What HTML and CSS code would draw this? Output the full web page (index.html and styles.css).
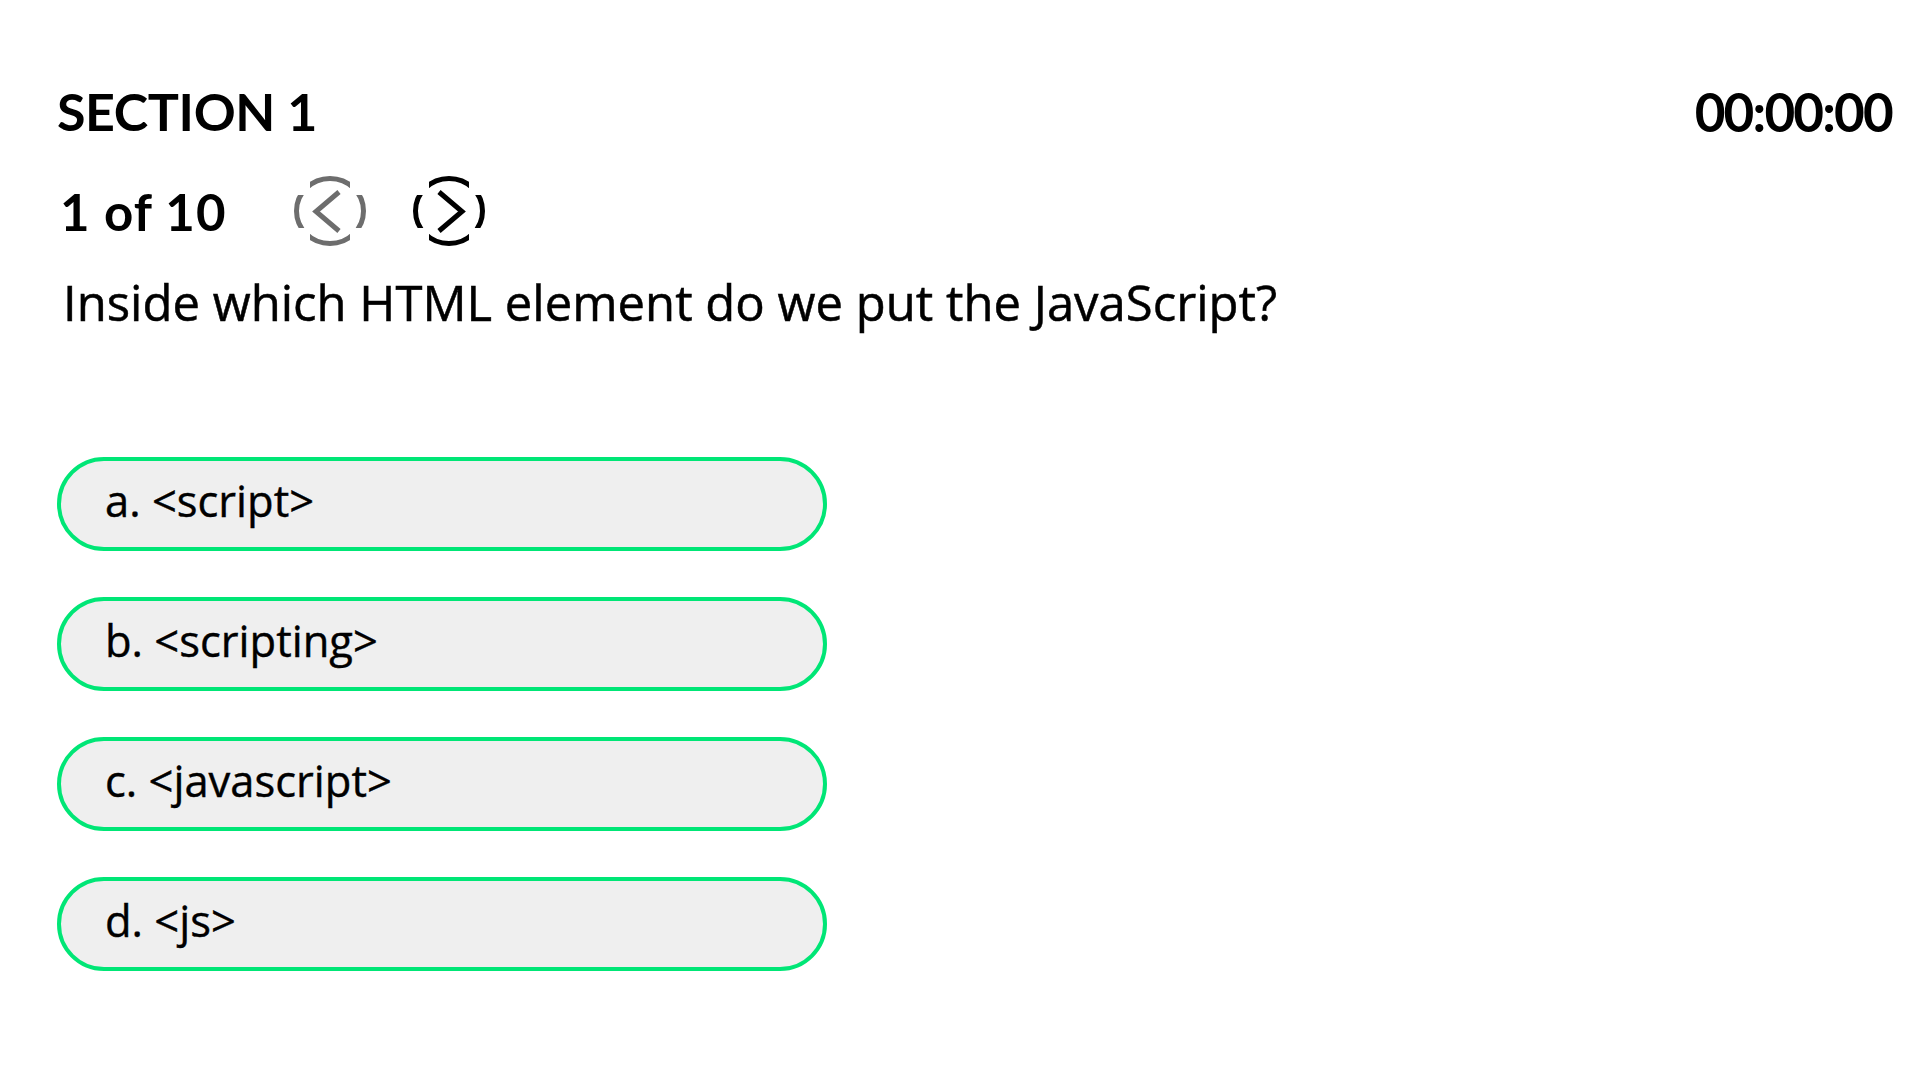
FILE: index.html
```html
<!DOCTYPE html>
<html lang="en">
<head>
<meta charset="utf-8">
<title>Quiz</title>
<link rel="stylesheet" href="styles.css">
</head>
<body>
<main class="page">
  <header class="top">
    <h1 class="section-title">SECTION 1</h1>
    <div class="timer">00:00:00</div>
  </header>
  <div class="nav-row">
    <span class="counter">1 of 10</span>
    <button class="nav-btn prev" aria-label="Previous">
      <svg viewBox="0 0 72 70" width="72" height="70">
        <defs>
          <clipPath id="cp1">
            <rect x="16" y="0" width="40" height="70"/>
            <rect x="0" y="19" width="72" height="33"/>
          </clipPath>
        </defs>
        <ellipse cx="36" cy="35" rx="33.5" ry="32.5" fill="none" stroke="currentColor" stroke-width="5" clip-path="url(#cp1)"/>
        <polyline points="45,16 22,35.5 45,55" fill="none" stroke="currentColor" stroke-width="5"/>
      </svg>
    </button>
    <button class="nav-btn next" aria-label="Next">
      <svg viewBox="0 0 72 70" width="72" height="70">
        <defs>
          <clipPath id="cp2">
            <rect x="16" y="0" width="40" height="70"/>
            <rect x="0" y="19" width="72" height="33"/>
          </clipPath>
        </defs>
        <ellipse cx="36" cy="35" rx="33.5" ry="32.5" fill="none" stroke="currentColor" stroke-width="5" clip-path="url(#cp2)"/>
        <polyline points="26,16 49,35.5 26,55" fill="none" stroke="currentColor" stroke-width="5"/>
      </svg>
    </button>
  </div>
  <p class="question">Inside which HTML element do we put the JavaScript?</p>
  <ul class="options">
    <li class="option">a. &lt;script&gt;</li>
    <li class="option">b. &lt;scripting&gt;</li>
    <li class="option">c. &lt;javascript&gt;</li>
    <li class="option">d. &lt;js&gt;</li>
  </ul>
</main>
</body>
</html>
```

FILE: styles.css
```css
* { box-sizing: border-box; }
html, body { margin: 0; padding: 0; background: #ffffff; }
body {
  font-family: "Open Sans", "Noto Sans", sans-serif;
  color: #000000;
}
.page {
  padding: 85px 28px 0 57px;
}
.top {
  display: flex;
  justify-content: space-between;
  align-items: flex-start;
}
.section-title {
  margin: 0;
  font-family: Lato, "Liberation Sans", sans-serif;
  font-weight: 700;
  font-size: 52px;
  line-height: 52px;
  letter-spacing: -0.4px;
}
.timer {
  font-family: Lato, "Liberation Sans", sans-serif;
  font-weight: 700;
  font-size: 53px;
  line-height: 53px;
  letter-spacing: -1.8px;
}
.nav-row {
  display: flex;
  align-items: center;
  margin-top: 38px;
  height: 70px;
}
.counter {
  font-family: Lato, "Liberation Sans", sans-serif;
  font-weight: 700;
  font-size: 51px;
  line-height: 51px;
  letter-spacing: 1px;
  width: 237px;
  padding-left: 3px;
}
.nav-btn {
  border: 0;
  background: none;
  padding: 0;
  margin: 0 47px 0 0;
  width: 72px;
  height: 70px;
  display: block;
  cursor: pointer;
}
.nav-btn svg { display: block; }
.prev { color: #6d6d6d; }
.next { color: #000000; }
.question {
  margin: 26px 0 0 6px;
  font-size: 49px;
  line-height: 60px;
  font-weight: 400;
  -webkit-text-stroke: 0.5px #000000;
}
.options {
  list-style: none;
  margin: 125px 0 0 0;
  padding: 0;
  display: flex;
  flex-direction: column;
  gap: 46px;
}
.option {
  width: 770px;
  height: 94px;
  border: 4px solid #00e676;
  border-radius: 47px;
  background: #efefef;
  display: flex;
  align-items: center;
  padding: 0 0 6px 44px;
  font-size: 43.5px;
  font-weight: 400;
  line-height: 1;
  -webkit-text-stroke: 0.4px #000000;
}
```
